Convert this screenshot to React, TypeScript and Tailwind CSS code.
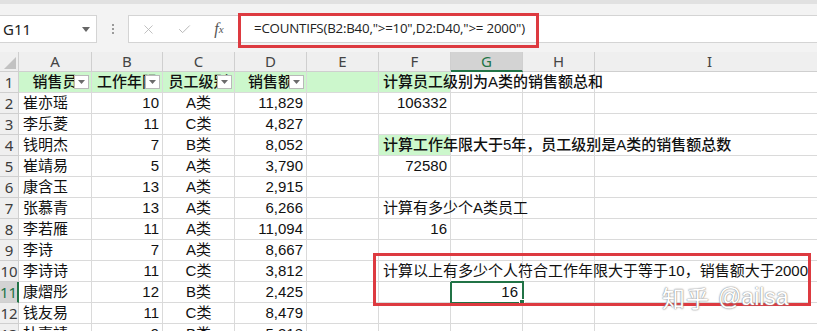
import { Check, X } from "lucide-react";

const cjk = "font-['Liberation_Sans','Noto_Sans_CJK_SC',sans-serif]";

const people: [string, number, string, string][] = [
  ["崔亦瑶", 10, "A类", "11,829"],
  ["李乐菱", 11, "C类", "4,827"],
  ["钱明杰", 7, "B类", "8,052"],
  ["崔靖易", 5, "A类", "3,790"],
  ["康含玉", 13, "A类", "2,915"],
  ["张慕青", 13, "A类", "6,266"],
  ["李若雁", 11, "A类", "11,094"],
  ["李诗", 7, "A类", "8,667"],
  ["李诗诗", 11, "C类", "3,812"],
  ["康熠彤", 12, "B类", "2,425"],
  ["钱友易", 11, "C类", "8,479"],
  ["杜嘉靖", 9, "B类", "5,318"],
];

type FCell = { text: string; num?: boolean; strong?: boolean; green?: boolean };

// notes typed into column F, keyed by row number
const notes: Record<number, FCell> = {
  1: { text: "计算员工级别为A类的销售额总和", strong: true, green: true },
  2: { text: "106332", num: true },
  4: { text: "计算工作年限大于5年，员工级别是A类的销售额总数", strong: true, green: true },
  5: { text: "72580", num: true },
  7: { text: "计算有多少个A类员工" },
  8: { text: "16", num: true },
  10: { text: "计算以上有多少个人符合工作年限大于等于10，销售额大于2000" },
};

const cols = ["A", "B", "C", "D", "E", "F", "G", "H", "I"];
const cell = "h-[21px] border-r border-b border-[#dadada] flex items-center";

const FilterButton = () => (
  <span className="absolute right-[2px] top-[3px] w-[15px] h-[14px] bg-white border border-[#b9b9b9] flex items-center justify-center">
    <svg width="7" height="4" viewBox="0 0 7 4">
      <path d="M0 0h7L3.5 4z" fill="#6b6b6b" />
    </svg>
  </span>
);

const HeaderCell = ({ label }: { label: string }) => (
  <div className={`${cell} relative justify-center overflow-hidden bg-[#ccf7cc] font-medium`}>
    <span className="whitespace-nowrap">{label}</span>
    <FilterButton />
  </div>
);

const NoteCell = ({ note }: { note?: FCell }) => {
  if (!note) return <div className={cell} />;
  if (note.num) return <div className={`${cell} justify-end pr-[3px]`}>{note.text}</div>;
  return (
    <div className={`${cell} relative z-10 pl-[4px] whitespace-nowrap ${note.green ? "bg-[#ccf7cc]" : ""} ${note.strong ? "font-medium" : ""}`}>
      {note.text}
    </div>
  );
};

const RowHead = ({ n }: { n: number }) => {
  const active = n === 11;
  return (
    <div
      className={`h-[21px] border-b border-[#cfcfcf] flex items-center justify-center text-[15px] font-['Noto_Sans',sans-serif] ${
        active ? "bg-[#d3d3d3] text-[#217346] border-r-2 border-r-[#217346]" : "bg-[#efefef] text-[#3c3c3c] border-r border-r-[#cfcfcf]"
      }`}
    >
      {n}
    </div>
  );
};

export default function App() {
  return (
    <div className={`relative w-[817px] h-[331px] overflow-hidden bg-white text-[15px] text-[#111] ${cjk}`}>
      {/* formula bar */}
      <div className="h-[4px] bg-[#e1e1e1]" />
      <div className="h-[48px] bg-[#f3f3f3] pt-[11px]">
        <div className="flex items-start h-[28px]">
          <div className="w-[97px] h-[28px] bg-white border border-[#d4d4d4] border-l-0 flex items-center justify-between pl-[3px] pr-[6px]">
            <span className="font-['Noto_Sans',sans-serif] text-[15px] text-[#222]">G11</span>
            <svg width="8" height="5" viewBox="0 0 8 5">
              <path d="M0 0h8L4 5z" fill="#666" />
            </svg>
          </div>
          <div className="w-[31px] h-[28px] flex flex-col items-center justify-center gap-[2px]">
            <span className="w-[2px] h-[2px] bg-[#9a9a9a]" />
            <span className="w-[2px] h-[2px] bg-[#9a9a9a]" />
            <span className="w-[2px] h-[2px] bg-[#9a9a9a]" />
          </div>
          <div className="w-[112px] h-[28px] bg-white border border-[#d4d4d4] flex items-center">
            <span className="w-[38px] flex justify-center">
              <X size={15} strokeWidth={1.4} color="#b8b8b8" />
            </span>
            <span className="w-[34px] flex justify-center">
              <Check size={15} strokeWidth={1.6} color="#b8b8b8" />
            </span>
            <span className="w-[36px] flex justify-center font-['Liberation_Serif',serif] italic text-[16px] text-[#555]">
              f<span className="text-[11px] mt-[4px]">x</span>
            </span>
          </div>
          <div className="flex-1 h-[28px] bg-white border-y border-[#d4d4d4] flex items-center pl-[14px] font-['Open_Sans',sans-serif] text-[13.3px] text-[#222] tracking-[-0.2px]">
            =COUNTIFS(B2:B40,"&gt;=10",D2:D40,"&gt;= 2000")
          </div>
        </div>
      </div>

      {/* sheet */}
      <div className="grid grid-cols-[19px_73px_71px_72px_72px_72px_72px_72px_72px_230px]">
        <div className="h-[20px] bg-[#efefef] border-r border-b border-[#cfcfcf] flex items-end justify-end p-[2px]">
          <svg width="12" height="12" viewBox="0 0 12 12">
            <path d="M12 0v12H0z" fill="#c2c2c2" />
          </svg>
        </div>
        {cols.map((c) => (
          <div
            key={c}
            className={`h-[20px] flex items-center justify-center font-['Noto_Sans',sans-serif] text-[15px] ${
              c === "G"
                ? "bg-[#d3d3d3] text-[#217346] border-r border-[#cfcfcf] border-b-2 border-b-[#217346]"
                : "bg-[#efefef] text-[#444] border-r border-b border-[#cfcfcf]"
            }`}
          >
            {c}
          </div>
        ))}

        {/* row 1 */}
        <RowHead n={1} />
        <HeaderCell label="销售员" />
        <HeaderCell label="工作年限" />
        <HeaderCell label="员工级别" />
        <HeaderCell label="销售额" />
        <div className={`${cell} bg-[#ccf7cc]`} />
        <NoteCell note={notes[1]} />
        <div className={cell} />
        <div className={cell} />
        <div className={cell} />

        {people.map(([name, years, level, sales], i) => {
          const n = i + 2;
          return (
            <div key={n} className="contents">
              <RowHead n={n} />
              <div className={`${cell} pl-[4px] whitespace-nowrap`}>{name}</div>
              <div className={`${cell} justify-end pr-[3px]`}>{years}</div>
              <div className={`${cell} justify-center`}>{level}</div>
              <div className={`${cell} justify-end pr-[3px]`}>{sales}</div>
              <div className={cell} />
              <NoteCell note={notes[n]} />
              {n === 11 ? (
                <div className={`${cell} relative justify-end pr-[4px] outline-2 outline-[#217346] -outline-offset-1`}>
                  16
                  <span className="absolute -right-[3px] -bottom-[3px] w-[6px] h-[6px] bg-[#217346] border border-white" />
                </div>
              ) : (
                <div className={cell} />
              )}
              <div className={cell} />
              <div className={cell} />
            </div>
          );
        })}
      </div>

      {/* annotations drawn over the screenshot */}
      <div className="absolute left-[238px] top-[13px] w-[301px] h-[35px] border-[3px] border-[#dd3a40]" />
      <div className="absolute left-[373px] top-[253px] w-[438px] h-[53px] border-[3px] border-[#dd3a40]" />
      <div className="absolute left-[662px] top-[280px] z-20 flex items-center gap-[8px] text-[23px] text-white [text-shadow:0_0_1px_#777,0_0_2px_#999]">
        <span className="font-['Noto_Sans_CJK_SC',sans-serif] tracking-[1px]">知乎</span>
        <span className="font-['Liberation_Sans',sans-serif]">@ailsa</span>
      </div>
    </div>
  );
}
